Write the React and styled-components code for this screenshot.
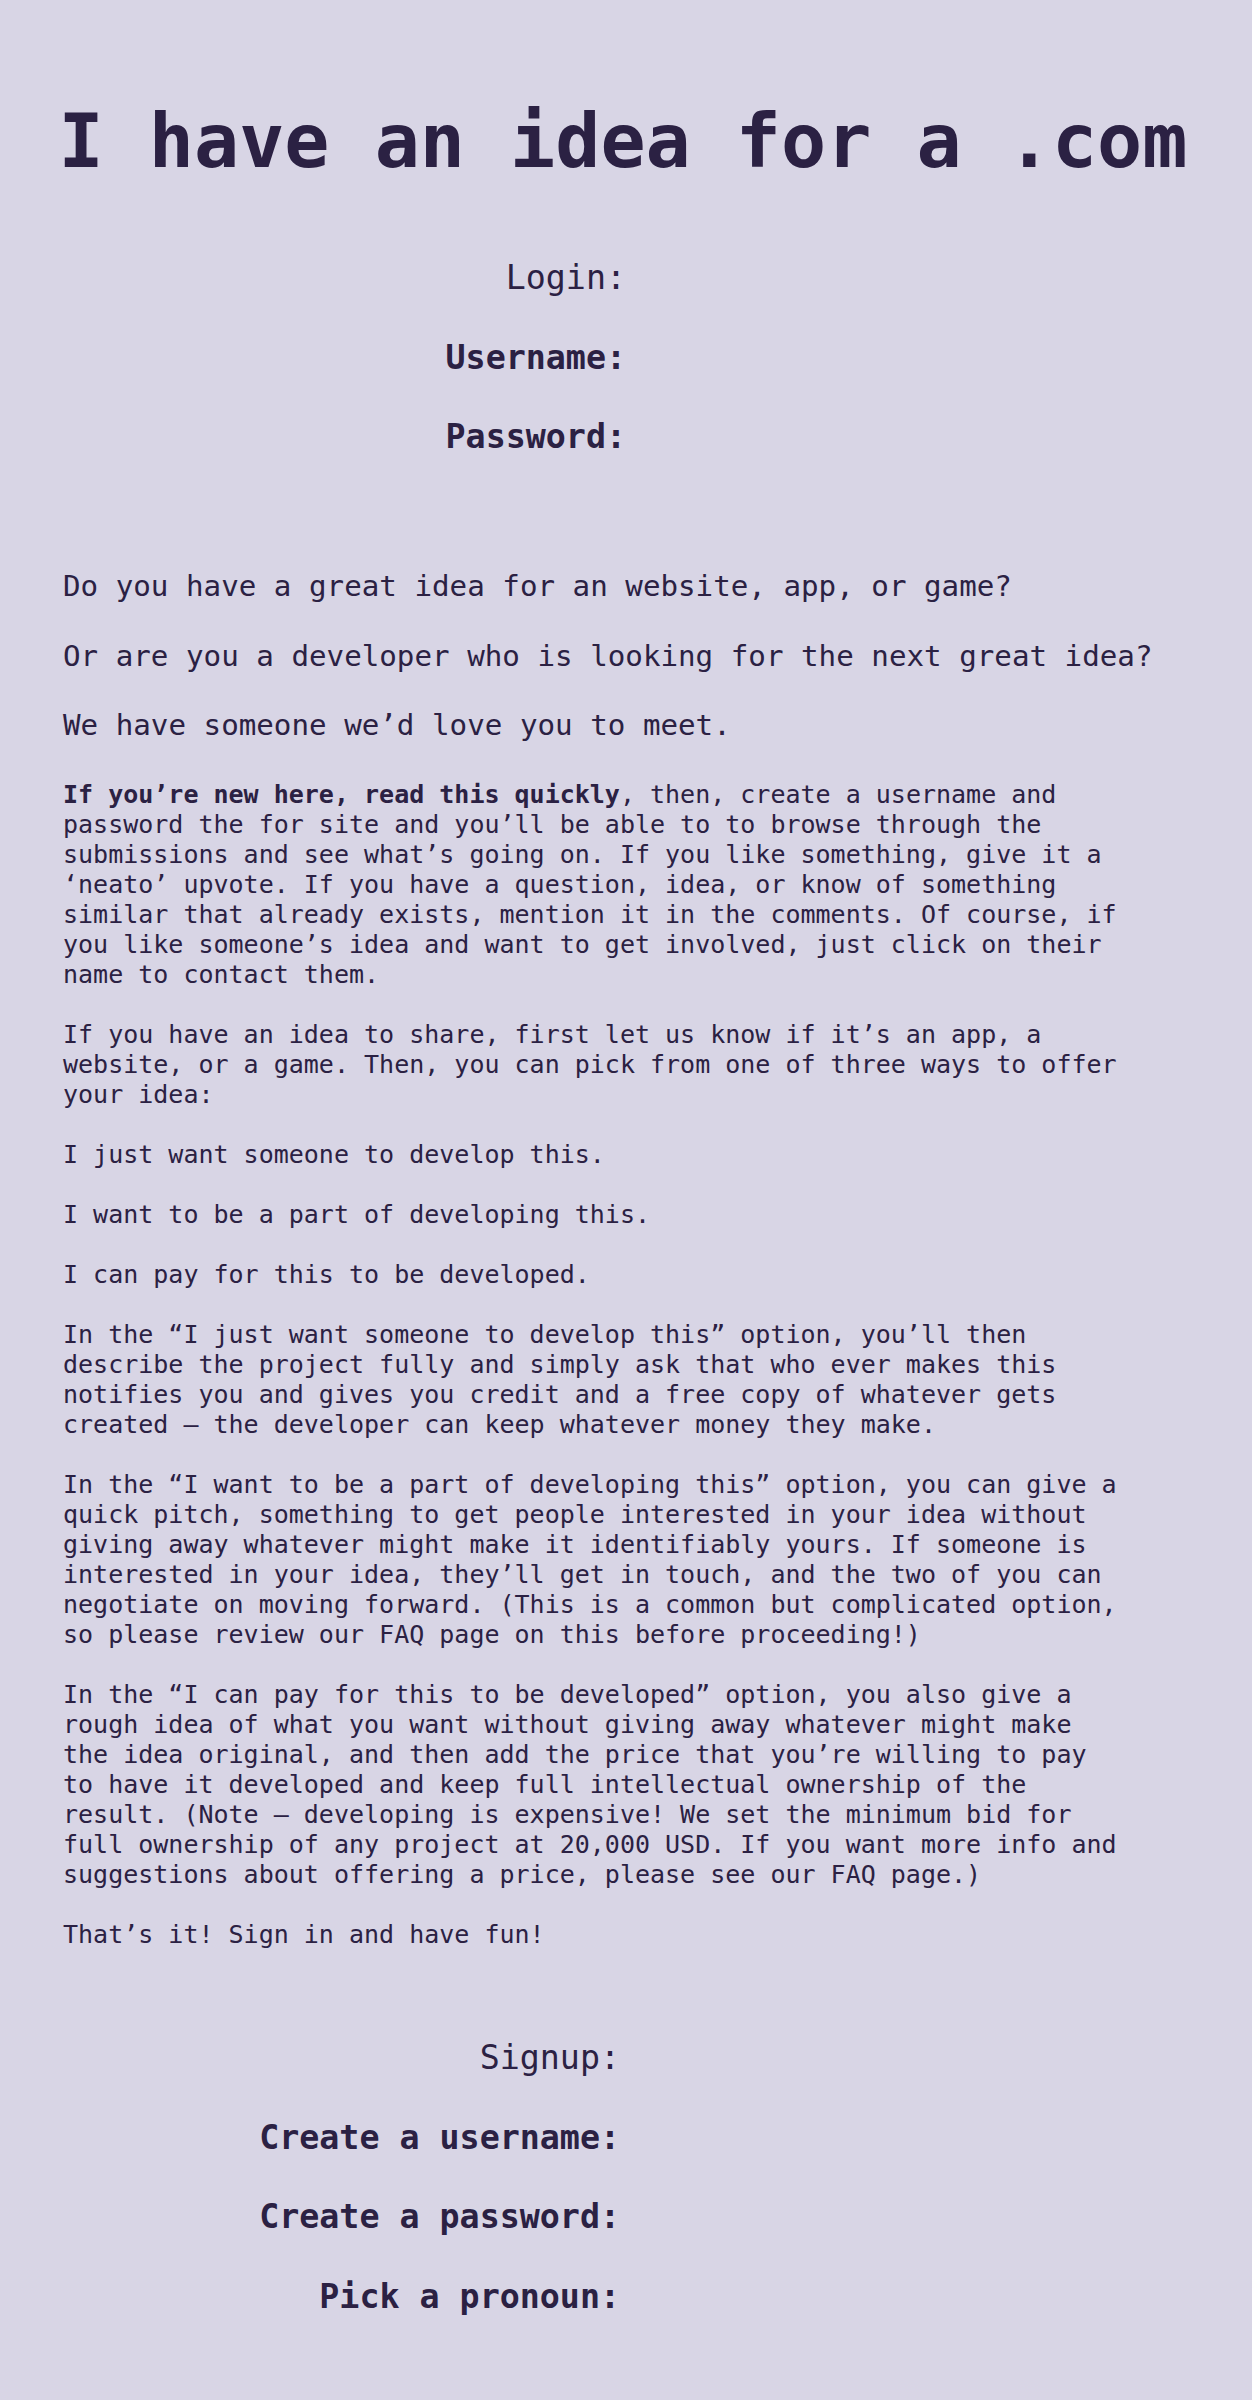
import styled, { createGlobalStyle } from "styled-components"

const GlobalStyle = createGlobalStyle`
    html, body {
        margin: 0;
        padding: 0;
        background-color: #d8d5e5;
    }
    body {
        font-family: 'DejaVu Sans Mono', 'Liberation Mono', monospace;
        color: #2b2143;
    }
`

export default function App(){
    return(
        <>
        <GlobalStyle/>
        <Page>
            <Title>I have an idea for a .com</Title>

            <Form $edge={626} $top={73}>
                <Label>Login:</Label>
                <Label $bold>Username:</Label>
                <Label $bold>Password:</Label>
            </Form>

            <Intro>
                <Lead>Do you have a great idea for an website, app, or game?</Lead>
                <Lead>Or are you a developer who is looking for the next great idea?</Lead>
                <Lead>We have someone we’d love you to meet.</Lead>
            </Intro>

            <Body>
                <Text>
                    <b>If you’re new here, read this quickly</b>, then, create a username and password the for site and you’ll be able to to browse through the submissions and see what’s going on. If you like something, give it a ‘neato’ upvote. If you have a question, idea, or know of something similar that already exists, mention it in the comments. Of course, if you like someone’s idea and want to get involved, just click on their name to contact them.
                </Text>
                <Text>
                    If you have an idea to share, first let us know if it’s an app, a website, or a game. Then, you can pick from one of three ways to offer your idea:
                </Text>
                <Text>I just want someone to develop this.</Text>
                <Text>I want to be a part of developing this.</Text>
                <Text>I can pay for this to be developed.</Text>
                <Text>
                    In the “I just want someone to develop this” option, you’ll then describe the project fully and simply ask that who ever makes this notifies you and gives you credit and a free copy of whatever gets created – the developer can keep whatever money they make.
                </Text>
                <Text>
                    In the “I want to be a part of developing this” option, you can give a quick pitch, something to get people interested in your idea without giving away whatever might make it identifiably yours. If someone is interested in your idea, they’ll get in touch, and the two of you can negotiate on moving forward. (This is a common but complicated option, so please review our FAQ page on this before proceeding!)
                </Text>
                <Text>
                    In the “I can pay for this to be developed” option, you also give a rough idea of what you want without giving away whatever might make the idea original, and then add the price that you’re willing to pay to have it developed and keep full intellectual ownership of the result. (Note – developing is expensive! We set the minimum bid for full ownership of any project at 20,000 USD. If you want more info and suggestions about offering a price, please see our FAQ page.)
                </Text>
                <Text>That’s it! Sign in and have fun!</Text>
            </Body>

            <Form $edge={620} $top={88}>
                <Label>Signup:</Label>
                <Label $bold>Create a username:</Label>
                <Label $bold>Create a password:</Label>
                <Label $bold>Pick a pronoun:</Label>
            </Form>
        </Page>
        </>
    )
}

const Page = styled.div`
    width: 100%;
    min-height: 2400px;
    padding: 97px 0 80px;
    box-sizing: border-box;
    display: flex;
    flex-direction: column;
`

const Title = styled.h1`
    margin: 0;
    padding-right: 6px;
    font-size: 75px;
    line-height: 88px;
    font-weight: 700;
    text-align: center;
    color: #2b2143;
`

const Form = styled.div`
    width: ${p => p.$edge}px;
    display: flex;
    flex-direction: column;
    align-items: flex-end;
    gap: 39.5px;
    margin-top: ${p => p.$top}px;
`

const Label = styled.label`
    font-size: 33.3px;
    line-height: 40px;
    font-weight: ${p => p.$bold ? 700 : 400};
    white-space: nowrap;
`

const Intro = styled.div`
    display: flex;
    flex-direction: column;
    gap: 34.5px;
    padding-left: 63px;
    margin-top: 112px;
`

const Lead = styled.h3`
    margin: 0;
    font-size: 29.2px;
    line-height: 35px;
    font-weight: 400;
`

const Body = styled.div`
    width: 1060px;
    padding-left: 63px;
    margin-top: 37px;
    display: flex;
    flex-direction: column;
    gap: 30px;
`

const Text = styled.p`
    margin: 0;
    font-size: 25px;
    line-height: 30px;
`
